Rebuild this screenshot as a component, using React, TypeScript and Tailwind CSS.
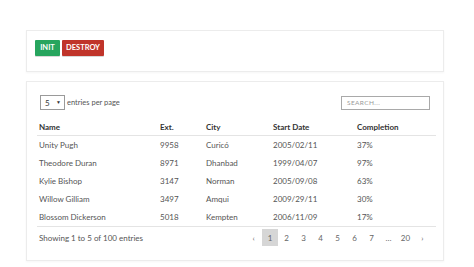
const rows = [
  { name: 'Unity Pugh', ext: '9958', city: 'Curicó', date: '2005/02/11', pct: '37%' },
  { name: 'Theodore Duran', ext: '8971', city: 'Dhanbad', date: '1999/04/07', pct: '97%' },
  { name: 'Kylie Bishop', ext: '3147', city: 'Norman', date: '2005/09/08', pct: '63%' },
  { name: 'Willow Gilliam', ext: '3497', city: 'Amqui', date: '2009/29/11', pct: '30%' },
  { name: 'Blossom Dickerson', ext: '5018', city: 'Kempten', date: '2006/11/09', pct: '17%' },
];

const cols = 'grid grid-cols-[121px_46px_67px_84px_81px]';

export default function App() {
  return (
    <div className="w-[474px] h-[267px] bg-white font-['Lato',sans-serif] text-[8px] text-[#444] pt-[30px] pl-[26px]">
      {/* controls */}
      <div className="w-[418px] h-[42px] border border-[#ececec] shadow-[0_1px_2px_rgba(0,0,0,0.04)] pl-[8px] pt-[9px]">
        <div className="flex gap-[2px]">
          <button className="h-[16px] w-[25px] bg-[#27a55e] text-white font-bold text-[7.5px] rounded-[1px] shadow-[0_1px_0_rgba(0,0,0,0.15)]">
            INIT
          </button>
          <button className="h-[16px] w-[42px] bg-[#c0342a] text-white font-bold text-[7.5px] rounded-[1px] shadow-[0_1px_0_rgba(0,0,0,0.15)]">
            DESTROY
          </button>
        </div>
      </div>

      {/* datatable */}
      <div className="mt-[9px] w-[418px] h-[180px] border border-[#ececec] shadow-[0_1px_2px_rgba(0,0,0,0.04)] pl-[10px] pr-[7px] pt-[13px]">
        <div className="flex items-center justify-between pl-[3px] pr-[6px]">
          <div className="flex items-center gap-[2px]">
            <div className="w-[25px] h-[15px] border border-[#9a9a9a] flex items-center justify-between pl-[4px] pr-[3px] text-[#333]">
              <span className="text-[8px]">5</span>
              <span className="text-[5px]">▼</span>
            </div>
            <span className="text-[7.5px] text-[#555]">entries per page</span>
          </div>
          <div className="w-[89px] h-[14px] border border-[#a9a9a9] flex items-center pl-[5px] text-[6.5px] tracking-[0.06em] text-[#999]">
            SEARCH...
          </div>
        </div>

        <div className="mt-[8px] w-[399px]">
          <div className={`${cols} h-[18px] items-center border-b border-[#e4e4e4] font-bold text-[#333] pl-[2px]`}>
            <span>Name</span>
            <span>Ext.</span>
            <span>City</span>
            <span>Start Date</span>
            <span>Completion</span>
          </div>
          {rows.map((r) => (
            <div key={r.name} className={`${cols} h-[18px] items-center text-[#555] pl-[2px]`}>
              <span>{r.name}</span>
              <span>{r.ext}</span>
              <span>{r.city}</span>
              <span>{r.date}</span>
              <span>{r.pct}</span>
            </div>
          ))}
          <div className="border-t border-[#e4e4e4] flex items-center justify-between h-[22px] pl-[2px] pr-[5px]">
            <span className="text-[#555]">Showing 1 to 5 of 100 entries</span>
            <div className="flex items-center text-[#666]">
              {['‹', '1', '2', '3', '4', '5', '6', '7', '…', '20', '›'].map((p, i) => (
                <span
                  key={i}
                  className={
                    p === '1'
                      ? 'w-[16px] h-[17px] bg-[#d6d6d6] flex items-center justify-center'
                      : 'w-[17px] h-[17px] flex items-center justify-center'
                  }
                >
                  {p}
                </span>
              ))}
            </div>
          </div>
        </div>
      </div>
    </div>
  );
}
